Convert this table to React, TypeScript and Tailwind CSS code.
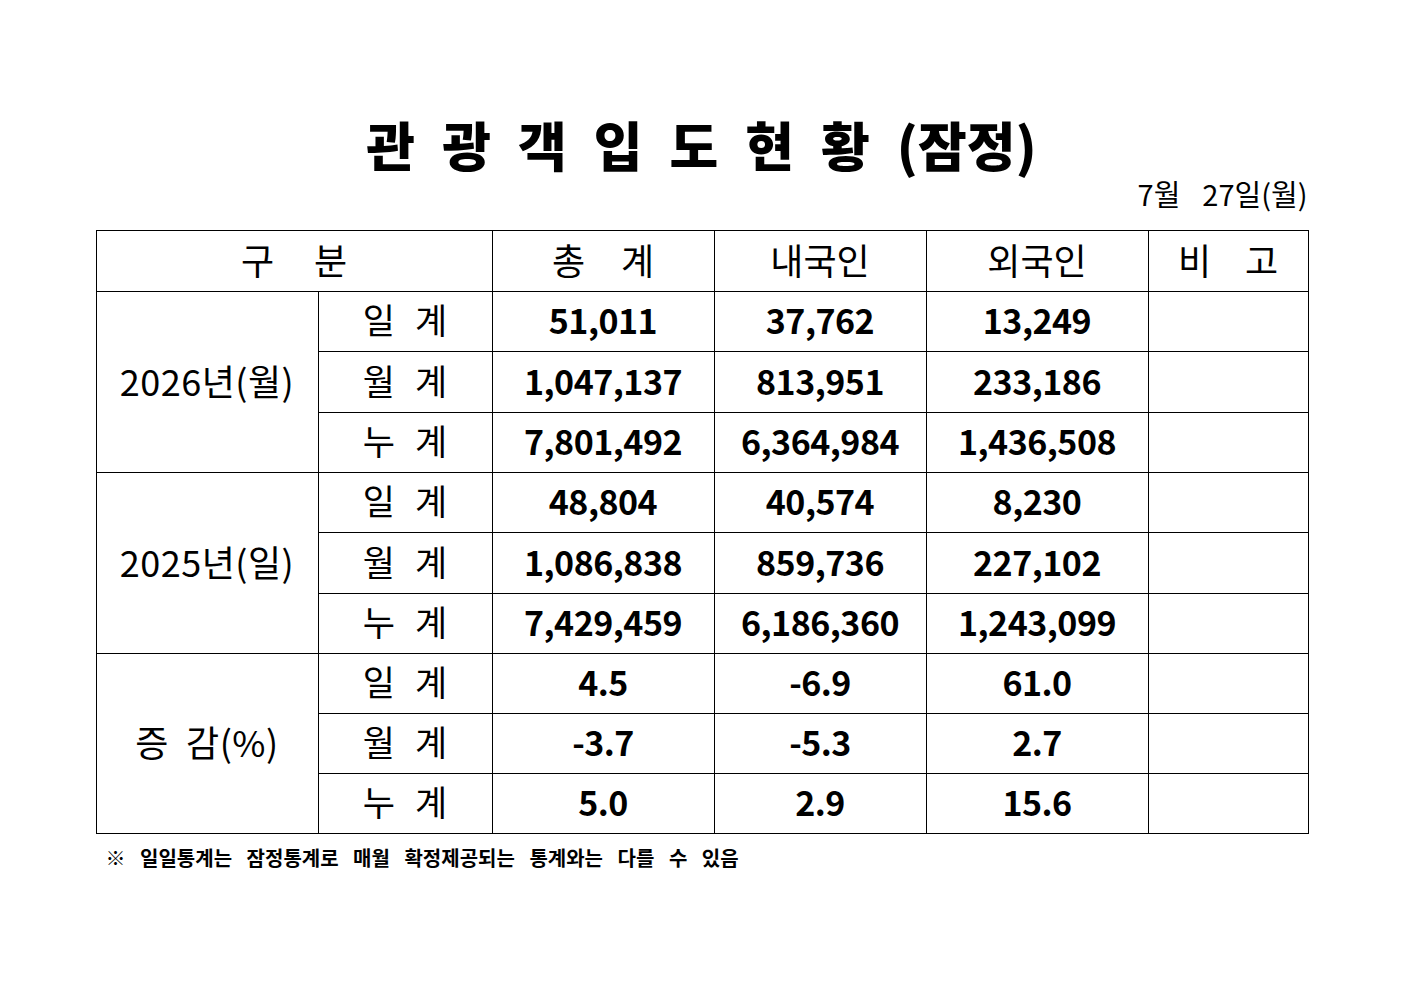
const rows = [
  {
    group: "2026년(월)",
    items: [
      { label: ["일", "계"], total: "51,011", dom: "37,762", intl: "13,249" },
      { label: ["월", "계"], total: "1,047,137", dom: "813,951", intl: "233,186" },
      { label: ["누", "계"], total: "7,801,492", dom: "6,364,984", intl: "1,436,508" },
    ],
  },
  {
    group: "2025년(일)",
    items: [
      { label: ["일", "계"], total: "48,804", dom: "40,574", intl: "8,230" },
      { label: ["월", "계"], total: "1,086,838", dom: "859,736", intl: "227,102" },
      { label: ["누", "계"], total: "7,429,459", dom: "6,186,360", intl: "1,243,099" },
    ],
  },
  {
    group: "증 감(%)",
    items: [
      { label: ["일", "계"], total: "4.5", dom: "-6.9", intl: "61.0" },
      { label: ["월", "계"], total: "-3.7", dom: "-5.3", intl: "2.7" },
      { label: ["누", "계"], total: "5.0", dom: "2.9", intl: "15.6" },
    ],
  },
];

const titleChars = ["관", "광", "객", "입", "도", "현", "황"];

function Spaced({ chars, gap }: { chars: string[]; gap: string }) {
  return (
    <span className={`inline-flex justify-center ${gap}`}>
      {chars.map((c, i) => (
        <span key={i}>{c}</span>
      ))}
    </span>
  );
}

export default function App() {
  return (
    <div className="min-h-[992px] w-full bg-white font-['Noto_Sans_CJK_KR','Noto_Sans',sans-serif] text-black">
      <div className="mx-auto w-[1212px] pt-[113px]">
        <h1 className="flex items-center justify-center gap-[27px] text-[53px] font-black leading-[62px]">
          {titleChars.map((c) => (
            <span key={c}>{c}</span>
          ))}
          <span>(잠정)</span>
        </h1>

        <p className="flex justify-end text-[29px] leading-[36px]">
          <span>7월</span>
          <span className="ml-[22px]">27일(월)</span>
        </p>

        <table className="mt-[19px] w-[1212px] table-fixed border-collapse border border-black">
          <colgroup>
            <col className="w-[222px]" />
            <col className="w-[174px]" />
            <col className="w-[222px]" />
            <col className="w-[212px]" />
            <col className="w-[222px]" />
            <col className="w-[160px]" />
          </colgroup>
          <thead>
            <tr className="h-[61px] text-[36px] font-normal">
              <th colSpan={2} className="border border-black pb-[5px] font-normal">
                <Spaced chars={["구", "분"]} gap="gap-[40px]" />
              </th>
              <th className="border border-black pb-[5px] font-normal">
                <Spaced chars={["총", "계"]} gap="gap-[36px]" />
              </th>
              <th className="border border-black pb-[5px] font-normal">내국인</th>
              <th className="border border-black pb-[5px] font-normal">외국인</th>
              <th className="border border-black pb-[5px] font-normal">
                <Spaced chars={["비", "고"]} gap="gap-[34px]" />
              </th>
            </tr>
          </thead>
          <tbody>
            {rows.map((g, gi) =>
              g.items.map((r, i) => (
                <tr key={g.group + i} className={i === 1 && gi < 2 ? "h-[61px]" : "h-[60px]"}>
                  {i === 0 && (
                    <td rowSpan={3} className="border border-black pb-[5px] text-center text-[36px] tracking-[0.5px]">
                      {g.group === "증 감(%)" ? (
                        <span className="whitespace-pre">증  감(%)</span>
                      ) : (
                        g.group
                      )}
                    </td>
                  )}
                  <td className="border border-black pb-[4px] text-center text-[35px]">
                    <Spaced chars={r.label} gap="gap-[20px]" />
                  </td>
                  <td className="border border-black pb-[4px] text-center text-[34px] font-bold tracking-[-0.5px]">{r.total}</td>
                  <td className="border border-black pb-[4px] text-center text-[34px] font-bold tracking-[-0.5px]">{r.dom}</td>
                  <td className="border border-black pb-[4px] text-center text-[34px] font-bold tracking-[-0.5px]">{r.intl}</td>
                  <td className="border border-black"></td>
                </tr>
              ))
            )}
          </tbody>
        </table>

        <p className="mt-[10px] pl-[10px] text-[20px] font-bold leading-[28px] [word-spacing:10px]">
          ※ 일일통계는 잠정통계로 매월 확정제공되는 통계와는 다를 수 있음
        </p>
      </div>
    </div>
  );
}
